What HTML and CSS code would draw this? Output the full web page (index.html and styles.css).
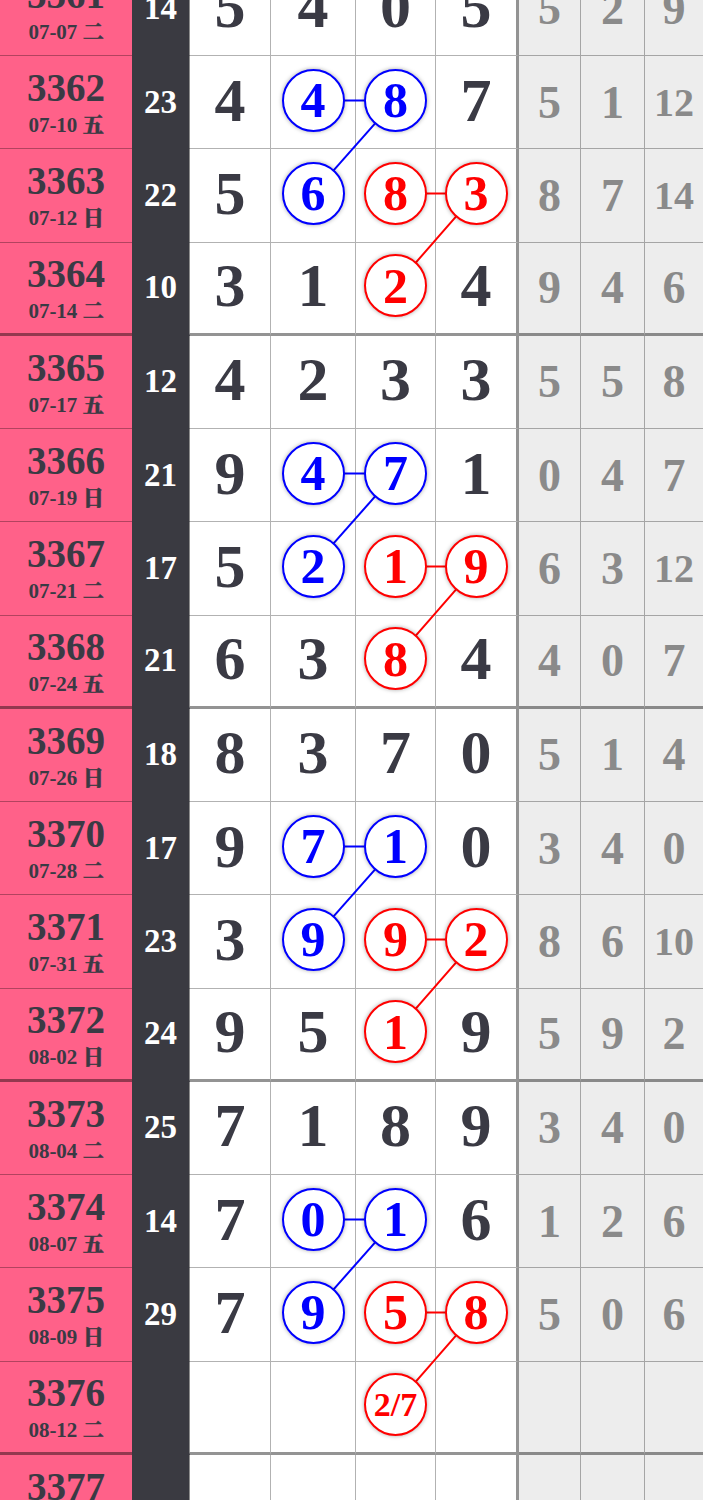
FILE: index.html
```html
<!DOCTYPE html>
<html lang="zh">
<head>
  <meta charset="UTF-8" />
  <meta name="viewport" content="width=device-width, initial-scale=1" />
  <title>走势图</title>
  <link rel="stylesheet" href="styles.css">
</head>
<body>

<div class="chart">

  <div class="r">
    <div class="no"><b>3361</b><span>07-07 <i>二</i></span></div>
    <div class="sum">14</div>
    <div class="d">5</div><div class="d">4</div><div class="d">0</div><div class="d c4">5</div>
    <div class="g">5</div><div class="g">2</div><div class="g">9</div>
  </div>
  <div class="r">
    <div class="no"><b>3362</b><span>07-10 <i>五</i></span></div>
    <div class="sum">23</div>
    <div class="d">4</div><div class="d"><span class="ball blue">4</span></div><div class="d"><span class="ball blue">8</span></div><div class="d c4">7</div>
    <div class="g">5</div><div class="g">1</div><div class="g sm">12</div>
  </div>
  <div class="r">
    <div class="no"><b>3363</b><span>07-12 <i>日</i></span></div>
    <div class="sum">22</div>
    <div class="d">5</div><div class="d"><span class="ball blue">6</span></div><div class="d"><span class="ball red">8</span></div><div class="d c4"><span class="ball red">3</span></div>
    <div class="g">8</div><div class="g">7</div><div class="g sm">14</div>
  </div>
  <div class="r end">
    <div class="no"><b>3364</b><span>07-14 <i>二</i></span></div>
    <div class="sum">10</div>
    <div class="d">3</div><div class="d">1</div><div class="d"><span class="ball red">2</span></div><div class="d c4">4</div>
    <div class="g">9</div><div class="g">4</div><div class="g">6</div>
  </div>

  <div class="r">
    <div class="no"><b>3365</b><span>07-17 <i>五</i></span></div>
    <div class="sum">12</div>
    <div class="d">4</div><div class="d">2</div><div class="d">3</div><div class="d c4">3</div>
    <div class="g">5</div><div class="g">5</div><div class="g">8</div>
  </div>
  <div class="r">
    <div class="no"><b>3366</b><span>07-19 <i>日</i></span></div>
    <div class="sum">21</div>
    <div class="d">9</div><div class="d"><span class="ball blue">4</span></div><div class="d"><span class="ball blue">7</span></div><div class="d c4">1</div>
    <div class="g">0</div><div class="g">4</div><div class="g">7</div>
  </div>
  <div class="r">
    <div class="no"><b>3367</b><span>07-21 <i>二</i></span></div>
    <div class="sum">17</div>
    <div class="d">5</div><div class="d"><span class="ball blue">2</span></div><div class="d"><span class="ball red">1</span></div><div class="d c4"><span class="ball red">9</span></div>
    <div class="g">6</div><div class="g">3</div><div class="g sm">12</div>
  </div>
  <div class="r end">
    <div class="no"><b>3368</b><span>07-24 <i>五</i></span></div>
    <div class="sum">21</div>
    <div class="d">6</div><div class="d">3</div><div class="d"><span class="ball red">8</span></div><div class="d c4">4</div>
    <div class="g">4</div><div class="g">0</div><div class="g">7</div>
  </div>

  <div class="r">
    <div class="no"><b>3369</b><span>07-26 <i>日</i></span></div>
    <div class="sum">18</div>
    <div class="d">8</div><div class="d">3</div><div class="d">7</div><div class="d c4">0</div>
    <div class="g">5</div><div class="g">1</div><div class="g">4</div>
  </div>
  <div class="r">
    <div class="no"><b>3370</b><span>07-28 <i>二</i></span></div>
    <div class="sum">17</div>
    <div class="d">9</div><div class="d"><span class="ball blue">7</span></div><div class="d"><span class="ball blue">1</span></div><div class="d c4">0</div>
    <div class="g">3</div><div class="g">4</div><div class="g">0</div>
  </div>
  <div class="r">
    <div class="no"><b>3371</b><span>07-31 <i>五</i></span></div>
    <div class="sum">23</div>
    <div class="d">3</div><div class="d"><span class="ball blue">9</span></div><div class="d"><span class="ball red">9</span></div><div class="d c4"><span class="ball red">2</span></div>
    <div class="g">8</div><div class="g">6</div><div class="g sm">10</div>
  </div>
  <div class="r end">
    <div class="no"><b>3372</b><span>08-02 <i>日</i></span></div>
    <div class="sum">24</div>
    <div class="d">9</div><div class="d">5</div><div class="d"><span class="ball red">1</span></div><div class="d c4">9</div>
    <div class="g">5</div><div class="g">9</div><div class="g">2</div>
  </div>

  <div class="r">
    <div class="no"><b>3373</b><span>08-04 <i>二</i></span></div>
    <div class="sum">25</div>
    <div class="d">7</div><div class="d">1</div><div class="d">8</div><div class="d c4">9</div>
    <div class="g">3</div><div class="g">4</div><div class="g">0</div>
  </div>
  <div class="r">
    <div class="no"><b>3374</b><span>08-07 <i>五</i></span></div>
    <div class="sum">14</div>
    <div class="d">7</div><div class="d"><span class="ball blue">0</span></div><div class="d"><span class="ball blue">1</span></div><div class="d c4">6</div>
    <div class="g">1</div><div class="g">2</div><div class="g">6</div>
  </div>
  <div class="r">
    <div class="no"><b>3375</b><span>08-09 <i>日</i></span></div>
    <div class="sum">29</div>
    <div class="d">7</div><div class="d"><span class="ball blue">9</span></div><div class="d"><span class="ball red">5</span></div><div class="d c4"><span class="ball red">8</span></div>
    <div class="g">5</div><div class="g">0</div><div class="g">6</div>
  </div>
  <div class="r end">
    <div class="no"><b>3376</b><span>08-12 <i>二</i></span></div>
    <div class="sum"></div>
    <div class="d"></div><div class="d"></div><div class="d"><span class="ball red guess">2/7</span></div><div class="d c4"></div>
    <div class="g"></div><div class="g"></div><div class="g"></div>
  </div>

  <div class="r">
    <div class="no"><b>3377</b><span>08-14 <i>四</i></span></div>
    <div class="sum"></div>
    <div class="d"></div><div class="d"></div><div class="d"></div><div class="d c4"></div>
    <div class="g"></div><div class="g"></div><div class="g"></div>
  </div>

  <!-- 连线 -->
  <svg class="links" width="703" height="1586">
    <g id="grp">
      <line x1="313" y1="137.4" x2="395.5" y2="137.4" stroke="#0000ff" />
      <line x1="395.5" y1="137.4" x2="313" y2="230.6" stroke="#0000ff" />
      <line x1="395.5" y1="230.6" x2="476" y2="230.6" stroke="#ff0000" />
      <line x1="476" y1="230.6" x2="395.5" y2="322.9" stroke="#ff0000" />
    </g>
    <use href="#grp" y="373" />
    <use href="#grp" y="746" />
    <use href="#grp" y="1119" />
  </svg>

</div>

</body>
</html>
```

FILE: styles.css
```css
body {
  margin: 0;
  background: #fff;
  font-family: "Liberation Serif", "Noto Serif CJK SC", "Noto Sans CJK SC", serif;
  font-weight: bold;
  color: #3a3a44;
  overflow: hidden;
}

.chart {
  position: relative;
  margin-top: -37.25px;
}

.r {
  display: grid;
  grid-template-columns: 132px 58px 81px 85px 80px 83px 62px 64px 58px;
  height: 93.25px;
}

.r > div {
  box-sizing: border-box;
  display: flex;
  align-items: center;
  justify-content: center;
  border-bottom: 1px solid rgba(0, 0, 0, 0.3);
}

.r.end > div {
  border-bottom: 3px solid rgba(0, 0, 0, 0.42);
}

.no {
  background: #ff6189;
  flex-direction: column;
}

.no b {
  font-size: 39px;
  line-height: 38px;
}

.no span {
  font-size: 21px;
  line-height: 20px;
  margin-top: 6px;
}

.no i {
  font-style: normal;
  font-family: "Noto Serif CJK SC", "Noto Sans CJK SC", sans-serif;
  font-weight: 900;
  -webkit-text-stroke: 0.5px #3a3a44;
}

.r > .sum {
  background: #3a3a41;
  color: #fff;
  font-size: 33px;
  border-bottom-color: transparent;
  border-right: 1px solid #8d8d8d;
}

.r.end > .sum {
  border-bottom-color: transparent;
}

.d {
  font-size: 62px;
  padding-bottom: 4px;
  border-right: 1px solid rgba(0, 0, 0, 0.3);
}

.r > .c4 {
  border-right: 3px solid rgba(0, 0, 0, 0.42);
}

.g {
  background: #ededed;
  color: #8a8a8a;
  font-size: 46px;
  border-right: 1px solid rgba(0, 0, 0, 0.3);
}

.g.sm {
  font-size: 40px;
}

.g:last-child {
  border-right: none;
}

.ball {
  position: relative;
  z-index: 2;
  box-sizing: border-box;
  width: 63px;
  height: 63px;
  border-radius: 50%;
  border: 2px solid;
  background: #fff;
  display: flex;
  align-items: center;
  justify-content: center;
  font-size: 50px;
  line-height: 1;
  box-shadow: 0 0 4px rgba(0, 0, 0, 0.35);
}

.blue {
  color: #0000ff;
  border-color: #0000ff;
}

.red {
  color: #ff0000;
  border-color: #ff0000;
}

.ball.guess {
  font-size: 34px;
}

.links {
  position: absolute;
  top: 0;
  left: 0;
  z-index: 1;
  stroke-width: 2;
}
```
